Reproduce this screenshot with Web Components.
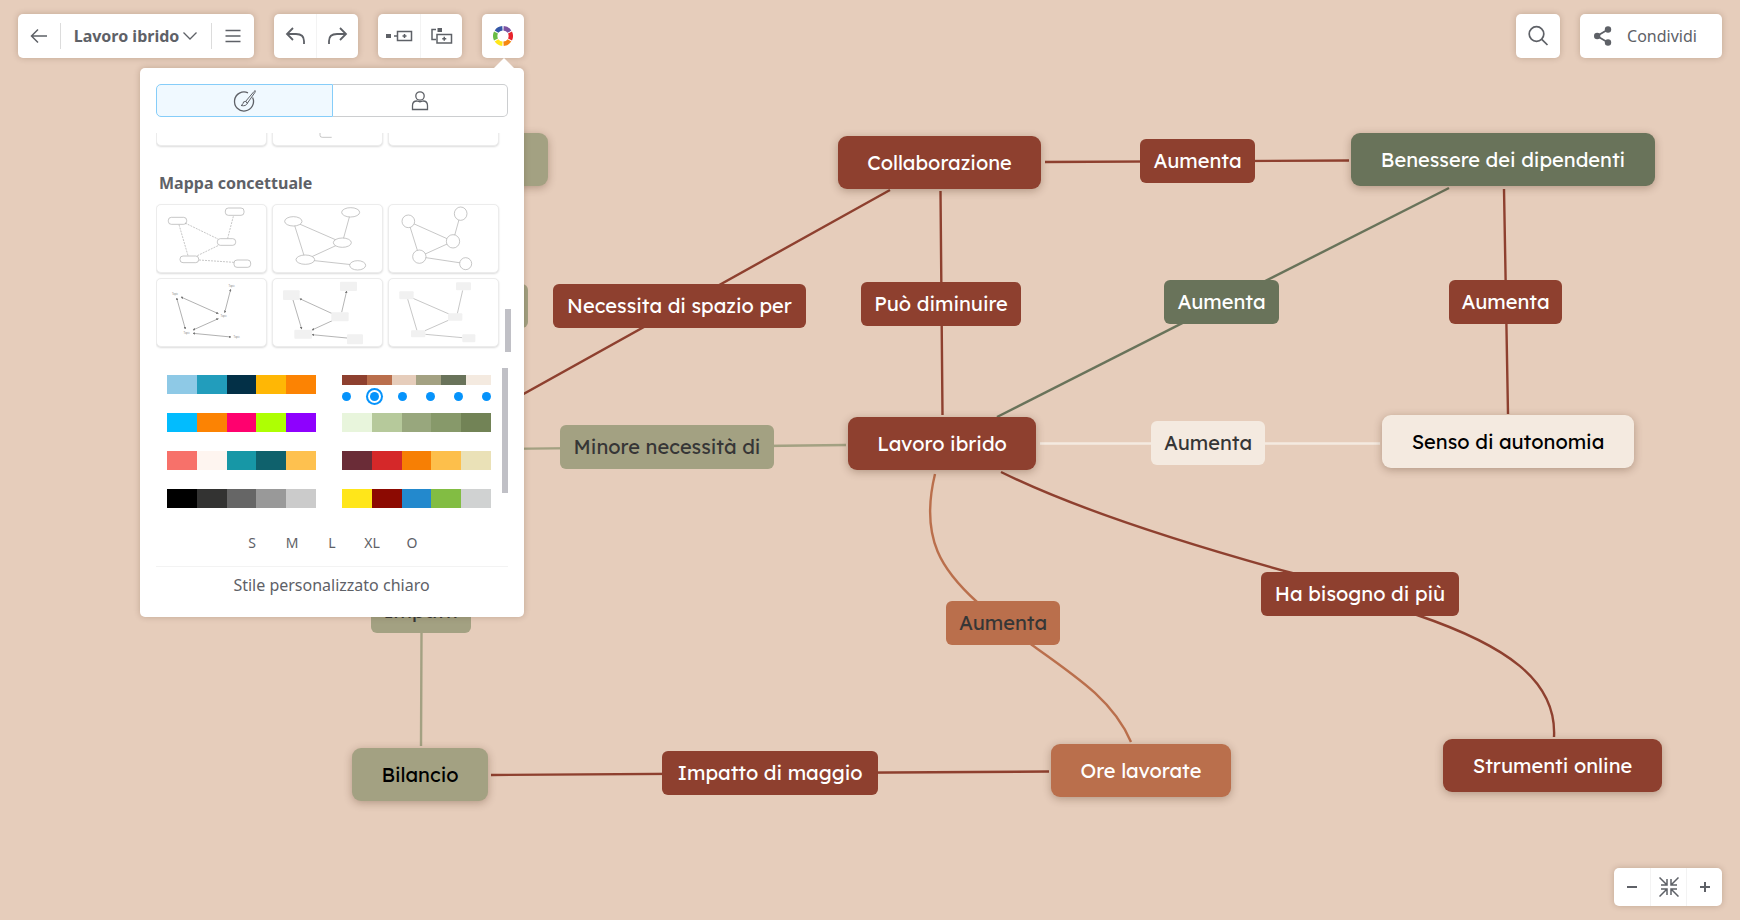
<!DOCTYPE html>
<html lang="it">
<head>
<meta charset="utf-8">
<meta name="viewport" content="width=device-width, initial-scale=1">
<title>Lavoro ibrido</title>
<style>
  html, body { height: 100%; margin: 0; }
  body {
    font-family: "Noto Sans", "Open Sans", sans-serif;
    font-size: 16px;
    color: #5e6167;
    background: #e6cdbb;
    --rust: #8e402f;
    --clay: #ba6f4c;
    --sage: #a3a182;
    --moss: #69735a;
    --cream: #f4eae0;
    --ink: #5e6167;
    --lift: 0 0 6px rgba(60, 30, 10, .22);
  }
</style>
</head>
<body>
<mind-map-app></mind-map-app>

<script>
const define = (name, html, setup) => {
  const template = document.createElement('template');
  template.innerHTML = html;
  customElements.define(name, class extends HTMLElement {
    constructor() {
      super();
      this.attachShadow({ mode: 'open' }).append(template.content.cloneNode(true));
    }
    connectedCallback() { if (setup) setup(this, this.shadowRoot); }
  });
};

/* Icons */
const icons = {
  back: [20, 20, '<path d="M18 10H3M9 3.500L2.500 10L9 16.500" stroke-width="1.500"/>'],
  chevron: [16, 16, '<path d="M1.500 4.500L8 11L14.500 4.500" stroke-width="1.300"/>'],
  menu: [16, 16, '<path d="M0.500 2.500H15.500M0.500 8H15.500M0.500 13.500H15.500" stroke-width="1.500"/>'],
  undo: [20, 20, '<path d="M8 2L2 8L8 14M2 8H11Q19 8 19 15V18" stroke-width="1.800"/>'],
  redo: [20, 20, '<path d="M12 2L18 8L12 14M18 8H9Q1 8 1 15V18" stroke-width="1.800"/>'],
  topic: [28, 16, '<path d="M1 6H6V10H1Z" fill="currentColor" stroke="none"/><path d="M9 8H12M12.500 3.500H26.500V12.500H12.500ZM19.500 6V10M17.500 8H21.500" stroke-width="1.500"/>'],
  subtopic: [24, 20, '<path d="M7.500 2H12V6H7.500Z" fill="currentColor" stroke="none"/><path d="M6 3.500H2V13.500H6M7 8.500H21.500V17H7ZM14.250 10.750V14.750M12.250 12.750H16.250" stroke-width="1.500"/>'],
  brush: [24, 24, '<path d="M19.600 8.500A9.500 9.500 0 1 1 15 3.900" stroke-width="1.300"/><path d="M12.500 12.500L21 2.500Q23 0.500 22 3.300L14.500 14ZM12.500 12.500Q10 12.200 10 14.500Q9.500 16 8 16.500Q13 17.700 14.500 14Z" fill="#f0f9ff" stroke-width="1"/>'],
  person: [20, 22, '<circle cx="10" cy="6" r="4.200" stroke-width="1.300"/><path d="M2.500 19.500V15.500Q2.500 11 7 11Q10 12.500 13 11Q17.500 11 17.500 15.500V19.500Z" stroke-width="1.300"/>'],
  search: [22, 22, '<circle cx="9.500" cy="9" r="7.300" stroke-width="1.700"/><path d="M14.800 14.300L20.500 20" stroke-width="1.700"/>'],
  share: [20, 20, '<path d="M15 3.500L4 10L15 16.500" stroke-width="1.800"/><g fill="currentColor" stroke="none"><circle cx="15" cy="3.500" r="3.200"/><circle cx="4.200" cy="10" r="3.200"/><circle cx="15" cy="16.500" r="3.200"/></g>'],
  minus: [12, 12, '<path d="M1 6H11" stroke-width="2"/>'],
  plus: [12, 12, '<path d="M1 6H11M6 1V11" stroke-width="2"/>'],
  fit: [20, 20, '<path d="M0.500 0.500L7.500 7.500M8 2V8H2M19.500 0.500L12.500 7.500M12 2V8H18M0.500 19.500L7.500 12.500M8 18V12H2M19.500 19.500L12.500 12.500M12 18V12H18" stroke-width="1.500"/>'],
  wheel: [20, 20, ['#7b52a1', '#e8232c', '#f68712', '#ffe61a', '#69bc45', '#3457a6'].map((c, i) =>
    `<path d="M10.550 2.220A7.800 7.800 0 0 1 16.470 5.640" transform="rotate(${i * 60} 10 10)" stroke="${c}" stroke-width="4.400"/>`).join('')]
};
customElements.define('ui-icon', class extends HTMLElement {
  connectedCallback() {
    if (this.shadowRoot) return;
    const [w, h, body] = icons[this.getAttribute('name')];
    this.attachShadow({ mode: 'open' }).innerHTML =
      `<style>:host{display:inline-flex;flex:none}svg{display:block}</style>
       <svg width="${w}" height="${h}" viewBox="0 0 ${w} ${h}" fill="none" stroke="currentColor" aria-hidden="true">${body}</svg>`;
  }
});

/* White box that groups toolbar buttons */
define('tool-group', `
<style>
  :host { display: flex; height: 44px; background: #fff; border-radius: 5px; box-shadow: var(--lift); }
  ::slotted(button) {
    flex: 1 1 auto; display: flex; align-items: center; justify-content: center;
    border: 0; margin: 0; padding: 0; background: none; color: var(--ink); font: inherit; cursor: pointer;
  }
  ::slotted(button.ruled) { border-left: 1px solid #f3f3f3; }
</style>
<slot></slot>`);

define('top-bar', `
<style>
  :host { display: flex; gap: 20px; padding: 14px 18px 0; }
  button { width: 42px; }
  .doc { width: 236px; align-items: center; }
  .doc button { height: 26px; flex: 0 0 42px; }
  .doc .name { flex: 1; gap: 3px; font-size: 16px; font-weight: 700; border: solid #dcdcdc; border-width: 0 1px; white-space: nowrap; }
  .pair { width: 84px; }
  .one { width: 42px; }
  .spacer { flex: 1; }
  .search { width: 44px; }
  .share { width: 142px; }
  .share button { gap: 14px; padding-right: 12px; font-size: 16px; }
</style>
<tool-group class="doc">
  <button aria-label="Indietro"><ui-icon name="back"></ui-icon></button>
  <button class="name">Lavoro ibrido<ui-icon name="chevron"></ui-icon></button>
  <button aria-label="Menu"><ui-icon name="menu"></ui-icon></button>
</tool-group>
<tool-group class="pair">
  <button aria-label="Annulla"><ui-icon name="undo"></ui-icon></button>
  <button class="ruled" aria-label="Ripeti"><ui-icon name="redo"></ui-icon></button>
</tool-group>
<tool-group class="pair">
  <button aria-label="Aggiungi argomento"><ui-icon name="topic"></ui-icon></button>
  <button class="ruled" aria-label="Aggiungi sottoargomento"><ui-icon name="subtopic"></ui-icon></button>
</tool-group>
<tool-group class="one">
  <button aria-label="Stile della mappa"><ui-icon name="wheel"></ui-icon></button>
</tool-group>
<div class="spacer"></div>
<tool-group class="search">
  <button aria-label="Cerca"><ui-icon name="search"></ui-icon></button>
</tool-group>
<tool-group class="share">
  <button><ui-icon name="share"></ui-icon>Condividi</button>
</tool-group>`);

define('zoom-bar', `
<style>
  :host { display: block; }
  tool-group { width: 108px; height: 38px; }
  button { width: 36px; }
</style>
<tool-group>
  <button aria-label="Riduci"><ui-icon name="minus"></ui-icon></button>
  <button class="ruled" aria-label="Adatta"><ui-icon name="fit"></ui-icon></button>
  <button class="ruled" aria-label="Ingrandisci"><ui-icon name="plus"></ui-icon></button>
</tool-group>`);

/* Layout previews for the concept map styles */
const rects = (list, rx) => list.map(([x, y, w, h]) => `<rect x="${x}" y="${y}" width="${w}" height="${h}" rx="${rx}"/>`).join('');
const arcs = (list) => list.map(([x, y, a, b]) => `<ellipse cx="${x}" cy="${y}" rx="${a}" ry="${b}"/>`).join('');
const line = (extra, d) => d.split('M').slice(1).map(s => `<path d="M${s}" ${extra}/>`).join('');
const previews = {
  boxes: line('stroke-dasharray="6 3"', 'M88 56L187 104M70 61L97 154M233 36L216 102M187 124L125 154M130 167L235 174') +
    rects([[38, 39, 55, 21], [209, 11, 56, 22], [185, 103, 55, 20], [73, 155, 56, 20], [235, 167, 50, 22]], 9),
  ovals: line('', 'M65 51L212 115M65 51L101 166M237 24L212 115M212 115L101 166M101 166L258 183') +
    `<g fill="#fff">${arcs([[65, 51, 26, 14], [237, 24, 27, 14], [212, 115, 27, 14], [101, 166, 28, 14], [258, 183, 24, 14]])}</g>`,
  circles: line('', 'M62 51L196 111M62 51L95 157M219 28L196 111M196 111L95 157M95 157L234 178') +
    `<g fill="#fff">${arcs([[62, 51, 19, 19], [219, 28, 19, 20], [196, 111, 20, 20], [95, 157, 20, 20], [234, 178, 18, 18]])}</g>`,
  words: `<g stroke="#8a8a8a">${line('marker-end="url(#tip)" marker-start="url(#tip)"', 'M76 56L188 106M63 59L89 152M225 33L207 103M188 121L112 155M112 165L226 176')}</g>
    <g fill="#888" stroke="none" font-size="8" text-anchor="middle">${[[58, 50], [228, 25], [204, 115], [93, 166], [243, 179]].map(([x, y]) => `<text x="${x}" y="${y}">Topic</text>`).join('')}</g>`,
  arrows: `<g stroke="#8f8f8f">${line('marker-end="url(#tip)"', 'M182 106L84 61M64 65L90 152M210 102L225 38M182 127L121 155M226 179L121 169')}</g>
    <g fill="#f1f1f1" stroke="none">${rects([[34, 36, 50, 29], [205, 10, 51, 28], [179, 102, 52, 27], [68, 154, 53, 27], [226, 168, 48, 30]], 3)}</g>`,
  blocks: line('', 'M76 60L184 107M60 62L88 157M209 106L225 36M182 126L112 157M113 168L224 178') +
    `<g fill="#f1f1f1" stroke="none">${rects([[35, 39, 43, 24], [205, 12, 45, 24], [181, 105, 43, 22], [70, 156, 43, 21], [224, 168, 39, 24]], 3)}</g>`,
  stub: '<path d="M145 150V174Q145 180 152 180H180"/>',
  none: ''
};
customElements.define('layout-card', class extends HTMLElement {
  connectedCallback() {
    if (this.shadowRoot) return;
    this.attachShadow({ mode: 'open' }).innerHTML = `
<style>
  :host { display: block; height: 69px; }
  button { display: block; box-sizing: border-box; width: 100%; height: 100%; padding: 0; border: 1px solid #ececec; border-radius: 5px; background: #fff; box-shadow: 0 1px 2px rgba(0,0,0,.14); cursor: pointer; }
  svg { display: block; width: 100%; height: 100%; }
</style>
<button aria-label="${this.getAttribute('label')}">
<svg viewBox="4 2 327 201" fill="none" stroke="#aaa" stroke-width="2">
<defs><marker id="tip" viewBox="0 0 6 6" refX="5" refY="3" markerWidth="4" markerHeight="4" orient="auto-start-reverse"><path d="M0 0L6 3L0 6Z" fill="#777" stroke="none"/></marker></defs>
${previews[this.getAttribute('preview')]}</svg></button>`;
  }
});

define('layout-gallery', `
<style>
  :host { display: flex; gap: 6px; height: 219px; overflow: hidden; }
  .list { flex: 1; display: flex; flex-direction: column; justify-content: flex-end; padding-bottom: 5px; }
  .grid { display: grid; grid-template-columns: repeat(3, 1fr); gap: 5px; }
  h2 { margin: 25px 3px 9px; font-size: 16px; line-height: 24px; font-weight: 700; }
  .thumb { width: 6px; height: 43px; align-self: flex-end; background: #c0c0c6; }
</style>
<div class="list">
  <div class="grid">
    <layout-card preview="none" label="Stile 1"></layout-card>
    <layout-card preview="stub" label="Stile 2"></layout-card>
    <layout-card preview="none" label="Stile 3"></layout-card>
  </div>
  <h2>Mappa concettuale</h2>
  <div class="grid">
    <layout-card preview="boxes" label="Riquadri"></layout-card>
    <layout-card preview="ovals" label="Ovali"></layout-card>
    <layout-card preview="circles" label="Cerchi"></layout-card>
    <layout-card preview="words" label="Solo testo"></layout-card>
    <layout-card preview="arrows" label="Frecce"></layout-card>
    <layout-card preview="blocks" label="Blocchi"></layout-card>
  </div>
</div>
<div class="thumb"></div>`);

/* One palette; the selected one also offers a choice of background colour */
customElements.define('color-palette', class extends HTMLElement {
  connectedCallback() {
    if (this.shadowRoot) return;
    const colors = this.getAttribute('colors').split(' ');
    const selected = this.hasAttribute('selected');
    this.attachShadow({ mode: 'open' }).innerHTML = `
<style>
  :host { display: block; height: 38px; }
  .bar { display: flex; width: 100%; height: 19px; padding: 0; border: 0; cursor: pointer; }
  :host([selected]) .bar { height: 10px; }
  i { flex: 1; align-self: stretch; }
  .dots { display: flex; justify-content: space-between; align-items: center; height: 23px; }
  input { appearance: none; width: 9px; height: 9px; margin: 0; border-radius: 50%; background: #0693fb; }
  input:checked { box-shadow: 0 0 0 2px #fff, 0 0 0 4px #0693fb; }
</style>
<button class="bar" aria-label="Tavolozza ${this.getAttribute('label')}">${colors.map(c => `<i style="background:${c}"></i>`).join('')}</button>
${selected ? `<div class="dots">${colors.map((c, i) => `<input type="radio" name="sfondo" aria-label="Sfondo ${i + 1}" ${i === 1 ? 'checked' : ''}>`).join('')}</div>` : ''}`;
  }
});

define('palette-list', `
<style>
  :host { display: flex; gap: 11px; height: 145px; padding-left: 11px; overflow: hidden; }
  .grid { flex: 1; display: grid; grid-template-columns: 1fr 1fr; column-gap: 26px; align-content: start; padding-top: 7px; }
  .thumb { width: 6px; height: 125px; background: #c0c0c6; }
</style>
<div class="grid">
  <color-palette label="1" colors="#8ec9e6 #229dbc #033047 #ffb705 #fc8303"></color-palette>
  <color-palette label="2" selected colors="#8e402f #ba6f4c #e6cdbb #a3a182 #69735a #f4eae0"></color-palette>
  <color-palette label="3" colors="#02bcfe #fc8303 #ff016e #aeff03 #8e01fe"></color-palette>
  <color-palette label="4" colors="#e8f5dc #b6c99b #98a77d #87996a #728356"></color-palette>
  <color-palette label="5" colors="#f7716a #fef5f0 #1797a6 #0f616c #fec14f"></color-palette>
  <color-palette label="6" colors="#6a2c37 #d52829 #f77f04 #fdbf4b #eae1b7"></color-palette>
  <color-palette label="7" colors="#000000 #333332 #666666 #999999 #cbcbcb"></color-palette>
  <color-palette label="8" colors="#ffe61a #8c0a02 #2389cd #82bd43 #d0d2d2"></color-palette>
</div>
<div class="thumb"></div>`);

define('style-panel', `
<style>
  :host { display: block; position: relative; box-sizing: border-box; width: 384px; padding: 16px 13px 0 16px; background: #fff; border-radius: 5px; box-shadow: var(--lift); }
  :host::before { content: ""; position: absolute; right: 10px; top: -10px; border: solid transparent; border-width: 0 10px 10px; border-bottom-color: #fff; }
  button { font: inherit; color: inherit; padding: 0; cursor: pointer; }
  .tabs { display: grid; grid-template-columns: 177px 1fr; height: 33px; margin-right: 3px; }
  .tabs button { display: flex; align-items: center; justify-content: center; background: #fff; border: 1px solid #ccced0; border-left: 0; border-radius: 0 5px 5px 0; }
  .tabs button[aria-selected=true] { background: #f0f9ff; border: 1px solid #86cdf9; border-radius: 5px 0 0 5px; }
  layout-gallery { margin-top: 16px; }
  palette-list { margin: 16px 3px 0 0; }
  .sizes { display: flex; justify-content: center; height: 54px; padding-top: 20px; box-sizing: border-box; margin-right: 3px; border-bottom: 1px solid #f3f3f3; }
  .sizes button { width: 40px; height: 20px; border: 0; background: none; font-size: 14px; line-height: 20px; }
  .custom { display: block; width: 100%; height: 50px; padding: 0 4px 14px 0; border: 0; background: none; font-size: 16px; }
</style>
<div class="tabs" role="tablist">
  <button role="tab" aria-selected="true" aria-label="Stili"><ui-icon name="brush"></ui-icon></button>
  <button role="tab" aria-selected="false" aria-label="Stili personali"><ui-icon name="person"></ui-icon></button>
</div>
<layout-gallery></layout-gallery>
<palette-list></palette-list>
<div class="sizes"><button>S</button><button>M</button><button>L</button><button>XL</button><button>O</button></div>
<button class="custom">Stile personalizzato chiaro</button>`);

/* Nodes and relation labels */
define('map-node', `
<style>
  :host {
    position: absolute; box-sizing: border-box; display: flex; align-items: center; justify-content: center;
    height: 53px; border-radius: 9px; background: var(--rust); color: #fff;
    font: 450 20px/24px Lexend, Inter, sans-serif; white-space: nowrap;
    box-shadow: 0 2px 8px rgba(60, 30, 10, .3);
  }
  :host([kind=link]) { height: 44px; border-radius: 6px; box-shadow: none; }
  :host([tone=moss]) { background: var(--moss); }
  :host([tone=clay]) { background: var(--clay); }
  :host([tone=sage]) { background: var(--sage); color: #000; font-weight: 400; }
  :host([tone=cream]) { background: var(--cream); color: #000; font-weight: 400; }
  :host([kind=link][tone=clay]), :host([kind=link][tone=sage]), :host([kind=link][tone=cream]) { color: #363636; font-weight: 400; }
</style>
<slot></slot>`, (el) => {
  const [x, y, w] = el.getAttribute('at').split(' ');
  Object.assign(el.style, { left: x + 'px', top: y + 'px', width: w + 'px' });
});

define('map-canvas', `
<style>
  :host { display: block; position: relative; overflow: hidden; }
  svg { display: block; width: 100%; height: 100%; overflow: visible; fill: none; stroke: var(--rust); stroke-width: 2.4px; }
  .moss { stroke: var(--moss); } .sage { stroke: var(--sage); } .clay { stroke: var(--clay); } .cream { stroke: var(--cream); }
</style>
<svg aria-hidden="true">
  <path d="M1045 162L1349 160.500M940.500 191L942.500 415M890 190L500 407M1504 189L1508 414M491 775L1049 771.500"/>
  <path d="M1001 472C1080 511 1190 545 1292 573L1417 615C1505 645 1557 680 1554 737"/>
  <path class="moss" d="M1449 188L997 417"/>
  <path class="cream" d="M1040 443.500H1380"/>
  <path class="sage" d="M846 445L500 449M421.500 633L421 746"/>
  <path class="clay" d="M935 474C919 540 944 572 977 602L1032 645C1080 679 1114 702 1131 742"/>
</svg>
<map-node at="838 136 203">Collaborazione</map-node>
<map-node kind="link" at="1140 139 115">Aumenta</map-node>
<map-node tone="moss" at="1351 133 304">Benessere dei dipendenti</map-node>
<map-node kind="link" at="553 284 253">Necessita di spazio per</map-node>
<map-node kind="link" at="861 282 160">Può diminuire</map-node>
<map-node kind="link" tone="moss" at="1164 280 115">Aumenta</map-node>
<map-node kind="link" at="1449 280 113">Aumenta</map-node>
<map-node kind="link" tone="sage" at="560 425 214">Minore necessità di</map-node>
<map-node at="848 417 188">Lavoro ibrido</map-node>
<map-node kind="link" tone="cream" at="1151 421 114">Aumenta</map-node>
<map-node tone="cream" at="1382 415 252">Senso di autonomia</map-node>
<map-node kind="link" tone="clay" at="946 601 114">Aumenta</map-node>
<map-node kind="link" at="1261 572 198">Ha bisogno di più</map-node>
<map-node at="1443 739 219">Strumenti online</map-node>
<map-node tone="clay" at="1051 744 180">Ore lavorate</map-node>
<map-node kind="link" at="662 751 216">Impatto di maggio</map-node>
<map-node tone="sage" at="352 748 136">Bilancio</map-node>
<map-node kind="link" tone="sage" at="371 589 100">Impatti</map-node>
<map-node tone="sage" at="400 133 148"></map-node>
<map-node kind="link" tone="sage" at="428 284 100"></map-node>`);

define('mind-map-app', `
<style>
  :host { display: grid; min-height: 100%; grid-template: 1fr / 1fr; }
  map-canvas, .chrome { grid-area: 1 / 1; }
  .chrome { position: relative; display: flex; flex-direction: column; align-items: stretch; }
  style-panel { margin: 10px 0 0 140px; }
  zoom-bar { margin: auto 18px 14px auto; }
</style>
<map-canvas></map-canvas>
<div class="chrome">
  <top-bar></top-bar>
  <style-panel></style-panel>
  <zoom-bar></zoom-bar>
</div>`);
</script>
</body>
</html>
